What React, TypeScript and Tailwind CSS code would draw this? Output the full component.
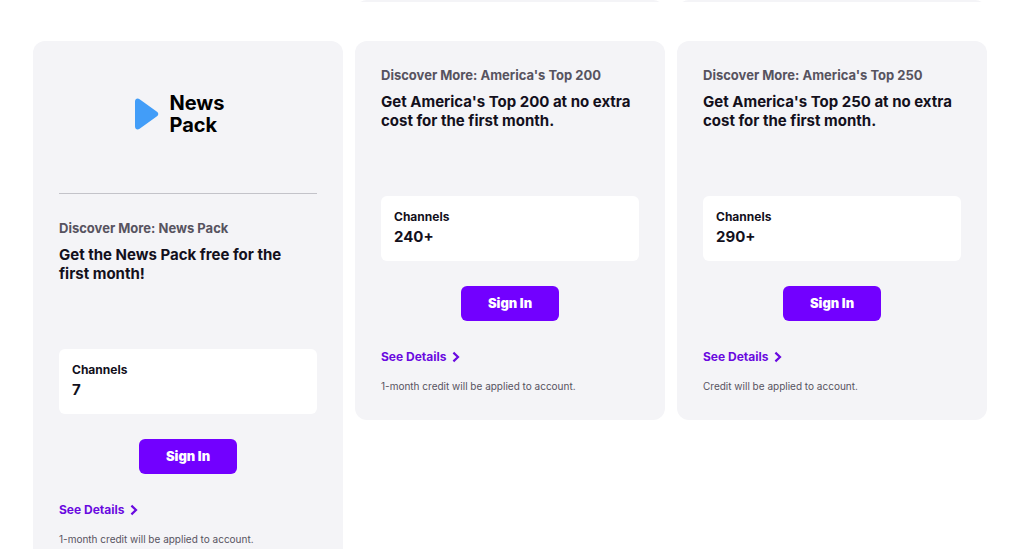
interface Offer {
  id: string
  eyebrow: string
  title: string
  channels: string
  note: string
  hasLogo?: boolean
}

const offers: Offer[] = [
  {
    id: 'news-pack',
    eyebrow: 'Discover More: News Pack',
    title: 'Get the News Pack free for the first month!',
    channels: '7',
    note: '1-month credit will be applied to account.',
    hasLogo: true,
  },
  {
    id: 'top-200',
    eyebrow: "Discover More: America's Top 200",
    title: "Get America's Top 200 at no extra cost for the first month.",
    channels: '240+',
    note: '1-month credit will be applied to account.',
  },
  {
    id: 'top-250',
    eyebrow: "Discover More: America's Top 250",
    title: "Get America's Top 250 at no extra cost for the first month.",
    channels: '290+',
    note: 'Credit will be applied to account.',
  },
]

function NewsPackLogo() {
  return (
    <div className="flex h-[153px] items-center justify-center gap-2.5 border-b border-[#c3c3c9] pb-1.5 pr-4">
      <svg className="h-8 w-6" viewBox="0 0 24 32" fill="none" aria-hidden="true">
        <path
          d="M0 3.5C0 .6 2.6-.3 4.6 1.2L22 13.8C23.7 15 23.7 17 22 18.2L4.6 30.8C2.6 32.3 0 31.4 0 28.5Z"
          fill="#429df8"
        />
      </svg>
      <p className="text-[20px] leading-[22px] font-bold text-black">
        News
        <br />
        Pack
      </p>
    </div>
  )
}

function ChevronIcon() {
  return (
    <svg className="h-3 w-2" viewBox="0 0 8 12" fill="none" aria-hidden="true">
      <path d="M1.4 1.6L6 6L1.4 10.4" stroke="currentColor" strokeWidth="2.2" />
    </svg>
  )
}

function OfferCard({ offer }: { offer: Offer }) {
  return (
    <article className="rounded-xl bg-[#f4f4f7] px-[26px] pb-[26px]">
      {offer.hasLogo && <NewsPackLogo />}

      <div className="pt-[25px]">
        <p className="text-[13px] leading-[18px] font-bold text-[#57535f]">{offer.eyebrow}</p>
        <h2 className="mt-2 min-h-[76px] pr-1 text-[15px] leading-[19px] font-bold text-[#13101c]">
          {offer.title}
        </h2>
      </div>

      <dl className="mt-7 rounded-md bg-white px-[13px] pt-3 pb-[13px] font-bold text-[#13101c]">
        <dt className="text-[12px] leading-[18px]">Channels</dt>
        <dd className="text-[15px] leading-[22px]">{offer.channels}</dd>
      </dl>

      <div className="mt-[25px] flex justify-center">
        <button
          type="button"
          className="h-[35px] w-[98px] rounded-md bg-[#7200ff] text-[13px] font-black text-white"
        >
          Sign In
        </button>
      </div>

      <a
        href={`#${offer.id}`}
        className="mt-[27px] flex items-center gap-1.5 text-[12px] leading-[18px] font-bold text-[#6a0ae0]"
      >
        See Details
        <ChevronIcon />
      </a>
      <p className="mt-3 text-[10px] leading-4 text-[#57535f]">{offer.note}</p>
    </article>
  )
}

export default function App() {
  return (
    <main className="bg-white pr-[43px] pl-[33px] font-['Inter',sans-serif]">
      {/* Lower edge of the row above */}
      <div className="grid h-0.5 grid-cols-3 items-end gap-3 overflow-hidden">
        <div className="col-start-2 h-6 rounded-xl bg-[#f4f4f7]" />
        <div className="h-6 rounded-xl bg-[#f4f4f7]" />
      </div>

      <section className="mt-[39px] grid grid-cols-3 items-start gap-3">
        {offers.map((offer) => (
          <OfferCard key={offer.id} offer={offer} />
        ))}
      </section>
    </main>
  )
}
